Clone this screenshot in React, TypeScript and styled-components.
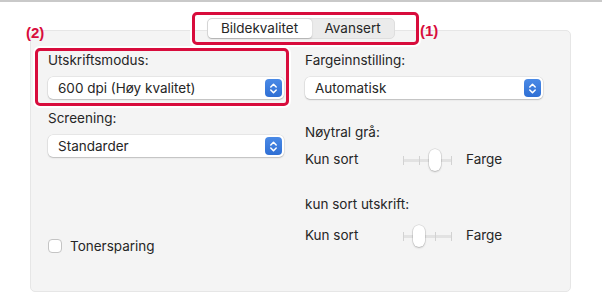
import styled, { createGlobalStyle } from 'styled-components';

const GlobalStyle = createGlobalStyle`
    body {
        margin: 0;
        background: #ffffff;
        font-family: Inter, "Liberation Sans", Arial, sans-serif;
        color: #262626;
    }
`;

const Stepper = () => (
    <StepperBox>
        <svg width="9" height="13" viewBox="0 0 9 13">
            <path
                d="M1.8 5 L4.5 2.2 L7.2 5 M1.8 8 L4.5 10.8 L7.2 8"
                fill="none"
                stroke="#fff"
                strokeWidth="1.5"
                strokeLinecap="round"
                strokeLinejoin="round"
            />
        </svg>
    </StepperBox>
);

const Select = ({ value }: { value: string }) => (
    <SelectBox>
        <span>{value}</span>
        <Stepper />
    </SelectBox>
);

const TICKS = 4;
const TRACK = 49;

const Slider = ({ value }: { value: number }) => (
    <SliderBox>
        <Track />
        {Array.from({ length: TICKS }).map((_, i) => (
            <Tick key={i} style={{ left: (i * (TRACK - 1)) / (TICKS - 1) }} />
        ))}
        <Thumb style={{ left: (value * (TRACK - 1)) / (TICKS - 1) - 6 }} />
    </SliderBox>
);

const App = () => {
    return (
        <Page>
            <GlobalStyle />
            <TopRule />
            <Stage>
                <TabRow>
                    <Segmented>
                        <Tab $active>Bildekvalitet</Tab>
                        <Tab>Avansert</Tab>
                    </Segmented>
                </TabRow>
                <Panel>
                    <Column>
                        <Label>Utskriftsmodus:</Label>
                        <Select value="600 dpi (Høy kvalitet)" />
                        <Label $top={11}>Screening:</Label>
                        <Select value="Standarder" />
                        <CheckRow>
                            <Checkbox />
                            <span>Tonersparing</span>
                        </CheckRow>
                    </Column>
                    <Column>
                        <Label>Fargeinnstilling:</Label>
                        <Select value="Automatisk" />
                        <Label $top={25}>Nøytral grå:</Label>
                        <SliderRow $top={8}>
                            <SideText>Kun sort</SideText>
                            <Slider value={2} />
                            <EndText>Farge</EndText>
                        </SliderRow>
                        <Label $top={26}>kun sort utskrift:</Label>
                        <SliderRow $top={12}>
                            <SideText>Kun sort</SideText>
                            <Slider value={1} />
                            <EndText>Farge</EndText>
                        </SliderRow>
                    </Column>
                </Panel>
            </Stage>
            <Callout $x={192} $y={12} $w={227} $h={33} />
            <Callout $x={35} $y={48} $w={254} $h={58} />
            <CalloutLabel $x={420} $y={22}>(1)</CalloutLabel>
            <CalloutLabel $x={26} $y={24}>(2)</CalloutLabel>
        </Page>
    );
};

export default App;

const Page = styled.div`
    position: relative;
    width: 602px;
    height: 293px;
    overflow: hidden;
    font-size: 13.5px;
`;

const TopRule = styled.div`
    height: 2px;
    background: #c9c9c9;
`;

const Stage = styled.div`
    padding: 0 31px 0 30px;
`;

const TabRow = styled.div`
    position: relative;
    z-index: 1;
    display: flex;
    justify-content: center;
    margin-top: 16px;
    margin-bottom: -9px;
`;

const Segmented = styled.div`
    display: flex;
    height: 21px;
    box-sizing: border-box;
    background: #ebebeb;
    border: 1px solid #dedede;
    border-radius: 5px;
`;

const Tab = styled.div<{ $active?: boolean }>`
    display: flex;
    align-items: center;
    justify-content: center;
    width: ${(p) => (p.$active ? '104px' : '82px')};
    line-height: 19px;
    border-radius: 4px;
    background: ${(p) => (p.$active ? '#ffffff' : 'transparent')};
    box-shadow: ${(p) =>
        p.$active ? '0 0.5px 1.5px rgba(0,0,0,0.22)' : 'none'};
    color: #262626;
`;

const Panel = styled.div`
    box-sizing: border-box;
    height: 262px;
    display: grid;
    grid-template-columns: 236px 238px;
    column-gap: 21px;
    padding: 21px 0 0 17px;
    background: #f4f4f4;
    border: 1px solid #e6e6e6;
    border-radius: 5px;
`;

const Column = styled.div`
    display: flex;
    flex-direction: column;
`;

const Label = styled.div<{ $top?: number }>`
    line-height: 16px;
    margin-top: ${(p) => p.$top ?? 0}px;
`;

const SelectBox = styled.div`
    display: flex;
    align-items: center;
    justify-content: space-between;
    height: 22px;
    margin-top: 9px;
    padding: 0 2px 0 10px;
    box-sizing: border-box;
    background: #ffffff;
    border-radius: 5px;
    box-shadow:
        0 0 0 0.5px rgba(0, 0, 0, 0.1),
        0 1px 1.5px rgba(0, 0, 0, 0.18);
    line-height: 16px;
`;

const StepperBox = styled.div`
    display: flex;
    align-items: center;
    justify-content: center;
    width: 17px;
    height: 18px;
    border-radius: 4px;
    background: linear-gradient(#4a8ae6, #2f6fd4);
`;

const CheckRow = styled.div`
    display: flex;
    align-items: center;
    gap: 8px;
    margin-top: 81px;
    line-height: 16px;
`;

const Checkbox = styled.div`
    width: 14px;
    height: 14px;
    box-sizing: border-box;
    background: #ffffff;
    border: 1px solid #c4c4c4;
    border-radius: 4px;
`;

const SliderRow = styled.div<{ $top: number }>`
    display: flex;
    align-items: center;
    height: 22px;
    margin-top: ${(p) => p.$top}px;
    line-height: 16px;
`;

const SideText = styled.span`
    width: 98px;
`;

const EndText = styled.span`
    margin-left: 14px;
`;

const SliderBox = styled.div`
    position: relative;
    width: ${TRACK}px;
    height: 22px;
`;

const Track = styled.div`
    position: absolute;
    left: 0;
    right: 0;
    top: 11px;
    height: 3px;
    background: #e2e2e2;
    border-radius: 2px;
`;

const Tick = styled.div`
    position: absolute;
    top: 8px;
    width: 1px;
    height: 9px;
    background: #d2d2d2;
`;

const Thumb = styled.div`
    position: absolute;
    top: 1px;
    width: 12px;
    height: 22px;
    box-sizing: border-box;
    background: #ffffff;
    border-radius: 6px;
    box-shadow:
        0 0 0 0.5px rgba(0, 0, 0, 0.15),
        0 1px 2px rgba(0, 0, 0, 0.2);
`;

const Callout = styled.div<{ $x: number; $y: number; $w: number; $h: number }>`
    position: absolute;
    left: ${(p) => p.$x}px;
    top: ${(p) => p.$y}px;
    width: ${(p) => p.$w}px;
    height: ${(p) => p.$h}px;
    box-sizing: border-box;
    border: 3px solid #d80c3c;
    border-radius: 5px;
    box-shadow: 0 0 0 2px #ffffff;
`;

const CalloutLabel = styled.div<{ $x: number; $y: number }>`
    position: absolute;
    left: ${(p) => p.$x}px;
    top: ${(p) => p.$y}px;
    font-family: "Liberation Sans", Arial, sans-serif;
    font-weight: bold;
    font-size: 15px;
    line-height: 18px;
    color: #d80c3c;
`;
